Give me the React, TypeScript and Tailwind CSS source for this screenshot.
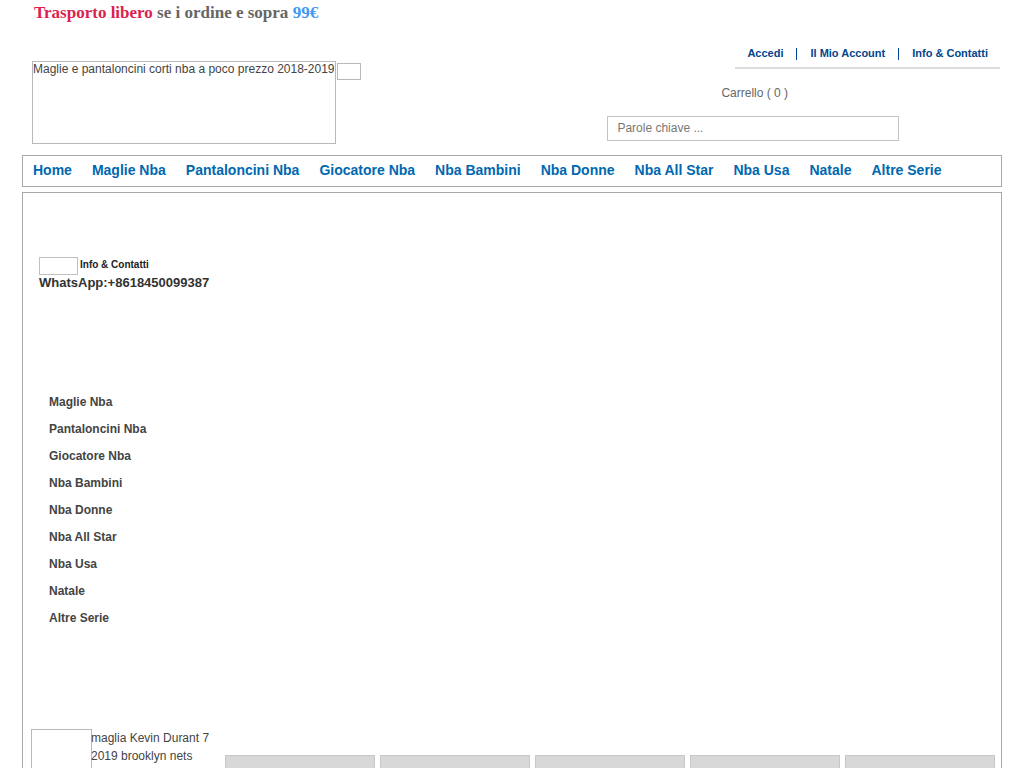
const categories = [
	"Maglie Nba",
	"Pantaloncini Nba",
	"Giocatore Nba",
	"Nba Bambini",
	"Nba Donne",
	"Nba All Star",
	"Nba Usa",
	"Natale",
	"Altre Serie",
];

const products = [1, 2, 3, 4, 5];

const Header = () => {
	return (
		<header className="flex h-32 justify-between pl-8 pr-6">
			<div className="flex items-start pt-[34px]">
				<a href="#" className="h-[83px] w-[304px] border border-[#b8b8b8] leading-[14px] whitespace-nowrap">
					Maglie e pantaloncini corti nba a poco prezzo 2018-2019
				</a>
				<a href="#" aria-label="Offerte" className="mt-[2px] ml-px h-[17px] w-6 border border-[#b8b8b8]" />
			</div>
			<div className="pt-[17px]">
				<div className="ml-32 flex h-[25px] items-start gap-[13px] border-b-2 border-[#ddd] px-3 text-[11px] font-bold text-[#00468c]">
					<a href="#">Accedi</a>
					<span className="mt-1 h-3 w-px bg-[#00468c]" />
					<a href="#">Il Mio Account</a>
					<span className="mt-1 h-3 w-px bg-[#00468c]" />
					<a href="#">Info &amp; Contatti</a>
				</div>
				<a href="#" className="mt-[15px] ml-[114px] block text-[#666]">
					Carrello ( 0 )
				</a>
				<input
					type="text"
					aria-label="Cerca"
					placeholder="Parole chiave ..."
					className="mt-[14px] block h-[25px] w-[292px] border border-[#c4c4c4] px-[9px] pb-[2px] placeholder:text-[#777]"
				/>
			</div>
		</header>
	);
};

const Sidebar = () => {
	return (
		<aside className="w-[202px] shrink-0 pt-16 pl-4">
			<div className="flex items-start gap-[2px] text-[10px] font-bold text-[#222]">
				<span className="h-[18px] w-[39px] border border-[#c0c0c0]" />
				<a href="#" className="leading-4">
					Info &amp; Contatti
				</a>
			</div>
			<p className="text-[13px] leading-4 font-bold text-[#333]">WhatsApp:+8618450099387</p>
			<ul className="mt-[98px] pl-[10px] text-xs leading-[27px] font-bold text-[#444]">
				{categories.map((name) => (
					<li key={name}>
						<a href="#">{name}</a>
					</li>
				))}
			</ul>
			<a href="#" className="mt-[97px] -ml-2 flex">
				<span className="h-[61px] w-[61px] shrink-0 border border-[#b8b8b8]" />
				<span className="-ml-px leading-[18px]">maglia Kevin Durant 7 2019 brooklyn nets</span>
			</a>
		</aside>
	);
};

const App = () => {
	return (
		<div className="bg-white font-['Liberation_Sans',Arial,sans-serif] text-xs leading-[18px] text-[#444]">
			<p className="h-[27px] pl-[34px] font-['Liberation_Serif',serif] text-[17px] leading-[26px] font-bold text-[#666]">
				<span className="text-[#dc1e50]">Trasporto libero</span> se i ordine e sopra{" "}
				<span className="text-[#3f97f6]">99€</span>
			</p>
			<Header />
			<nav className="mx-[22px] flex h-8 items-center gap-5 border border-[#a8a8a8] pb-[2px] pl-[10px] text-sm font-bold whitespace-nowrap text-[#0068b0]">
				<a href="#">Home</a>
				{categories.map((name) => (
					<a href="#" key={name}>
						{name}
					</a>
				))}
			</nav>
			<main className="mx-[22px] mt-[5px] flex border border-[#a8a8a8] pr-[6px]">
				<Sidebar />
				<div className="grid flex-1 grid-cols-5 gap-[5px] pt-[562px]">
					{products.map((id) => (
						<a href="#" key={id} aria-label={`Maglia ${id}`} className="h-48 border border-[#c8c8c8] bg-[#d8d8d8]" />
					))}
				</div>
			</main>
		</div>
	);
};

export default App;
